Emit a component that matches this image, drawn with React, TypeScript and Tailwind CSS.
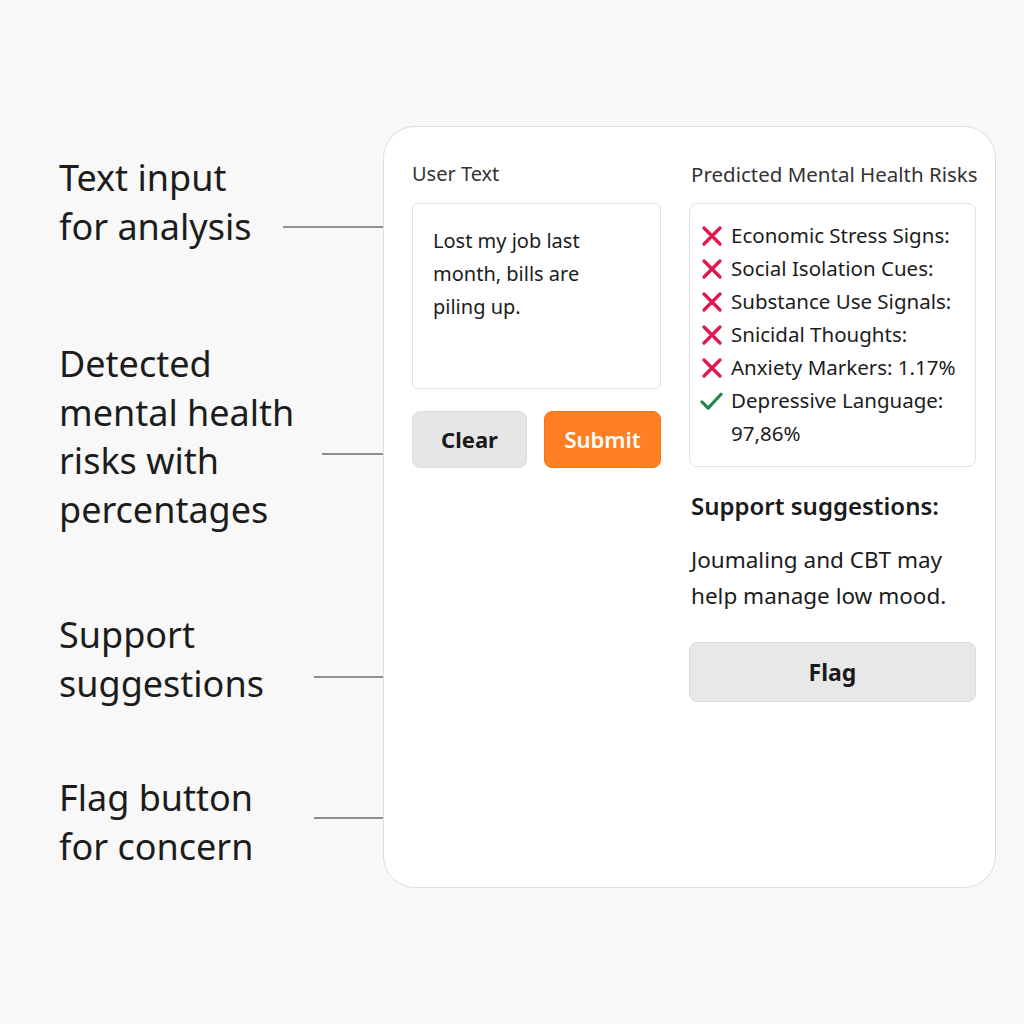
const FONT = 'font-["Noto_Sans","Open_Sans",sans-serif]';

const RISKS = [
  { label: 'Economic Stress Signs:', ok: false },
  { label: 'Social Isolation Cues:', ok: false },
  { label: 'Substance Use Signals:', ok: false },
  { label: 'Snicidal Thoughts:', ok: false },
  { label: 'Anxiety Markers: 1.17%', ok: false },
  { label: 'Depressive Language: 97,86%', ok: true },
] as const;

function CrossIcon() {
  return (
    <svg width="22" height="22" viewBox="0 0 22 22" fill="none">
      <path d="M3 3L19 19M19 3L3 19" stroke="#e0174f" strokeWidth="3.3" strokeLinecap="round" />
    </svg>
  );
}

function CheckIcon() {
  return (
    <svg width="24" height="22" viewBox="0 0 24 22" fill="none">
      <path d="M2 12L8.5 18.5L22 4" stroke="#23864a" strokeWidth="3.3" strokeLinecap="round" strokeLinejoin="round" />
    </svg>
  );
}

function Callout({
  lines,
  className,
  lineClass,
}: {
  lines: string[];
  className: string;
  lineClass: string;
}) {
  return (
    <div className={`flex items-start ${className}`}>
      <div className="text-[36px] leading-[48.5px] text-[#1c1c1c] whitespace-nowrap">
        {lines.map((l) => (
          <div key={l}>{l}</div>
        ))}
      </div>
      <div className={`ml-auto h-[2px] bg-[#8f8f8f] ${lineClass}`} />
    </div>
  );
}

export default function App() {
  return (
    <div className={`flex h-[1024px] w-[1024px] bg-[#f8f8f8] ${FONT}`}>
      {/* ── Left: callout labels ── */}
      <div className="flex w-[383px] flex-col pl-[59px] pt-[154px]">
        <Callout lines={['Text input', 'for analysis']} className="" lineClass="mt-[72px] w-[100px]" />
        <Callout
          lines={['Detected', 'mental health', 'risks with', 'percentages']}
          className="mt-[89px]"
          lineClass="mt-[113px] w-[61px]"
        />
        <Callout lines={['Support', 'suggestions']} className="mt-[77px]" lineClass="mt-[65px] w-[69px]" />
        <Callout lines={['Flag button', 'for concern']} className="mt-[66px]" lineClass="mt-[43px] w-[69px]" />
      </div>

      {/* ── Card ── */}
      <div className="mt-[126px] flex h-[762px] w-[613px] gap-[28px] rounded-[32px] border border-[#dedede] bg-white pl-[28px] pr-[20px] pt-[33px]">
        {/* User text column */}
        <div className="flex w-[249px] flex-col">
          <div className="text-[20px] leading-[28px] text-[#333]">User Text</div>
          <div className="mt-[15px] h-[186px] rounded-[6px] border border-[#e2e2e2] px-[20px] pt-[20px] text-[20px] leading-[33px] text-[#1c1c1c]">
            <div>Lost my job last</div>
            <div>month, bills are</div>
            <div>piling up.</div>
          </div>
          <div className="mt-[22px] flex gap-[17px]">
            <button
              type="button"
              className="h-[57px] w-[115px] rounded-[8px] border border-[#dcdcdc] bg-[#e6e6e6] text-[22px] font-bold text-[#1a1a1a]"
            >
              Clear
            </button>
            <button
              type="button"
              className="h-[57px] w-[117px] rounded-[8px] border border-[#f47415] bg-[#ff7f22] text-[22px] font-semibold text-white"
            >
              Submit
            </button>
          </div>
        </div>

        {/* Prediction column */}
        <div className="flex w-[287px] flex-col">
          <div className="whitespace-nowrap pl-[2px] text-[20.5px] leading-[28px] text-[#333]">
            Predicted Mental Health Risks
          </div>
          <div className="mt-[15px] flex h-[264px] flex-col rounded-[8px] border border-[#e2e2e2] pl-[10px] pr-[8px] pt-[15px]">
            {RISKS.map((r) => (
              <div key={r.label} className="flex items-start gap-[8px] text-[20.5px] leading-[33px] text-[#1c1c1c]">
                <span className="flex h-[33px] w-[23px] shrink-0 items-center justify-center">
                  {r.ok ? <CheckIcon /> : <CrossIcon />}
                </span>
                <span className="max-w-[230px]">{r.label}</span>
              </div>
            ))}
          </div>

          <div className="mt-[23px] whitespace-nowrap pl-[2px] text-[24px] font-semibold leading-[32px] text-[#1a1a1a]">
            Support suggestions:
          </div>
          <div className="mt-[20px] pl-[2px] text-[22.5px] leading-[36px] text-[#1c1c1c]">
            Joumaling and CBT may
            <br />
            help manage low mood.
          </div>
          <button
            type="button"
            className="mt-[28px] h-[60px] w-full rounded-[8px] border border-[#dcdcdc] bg-[#e8e8e8] text-[23px] font-bold text-[#1a1a1a]"
          >
            Flag
          </button>
        </div>
      </div>
    </div>
  );
}
